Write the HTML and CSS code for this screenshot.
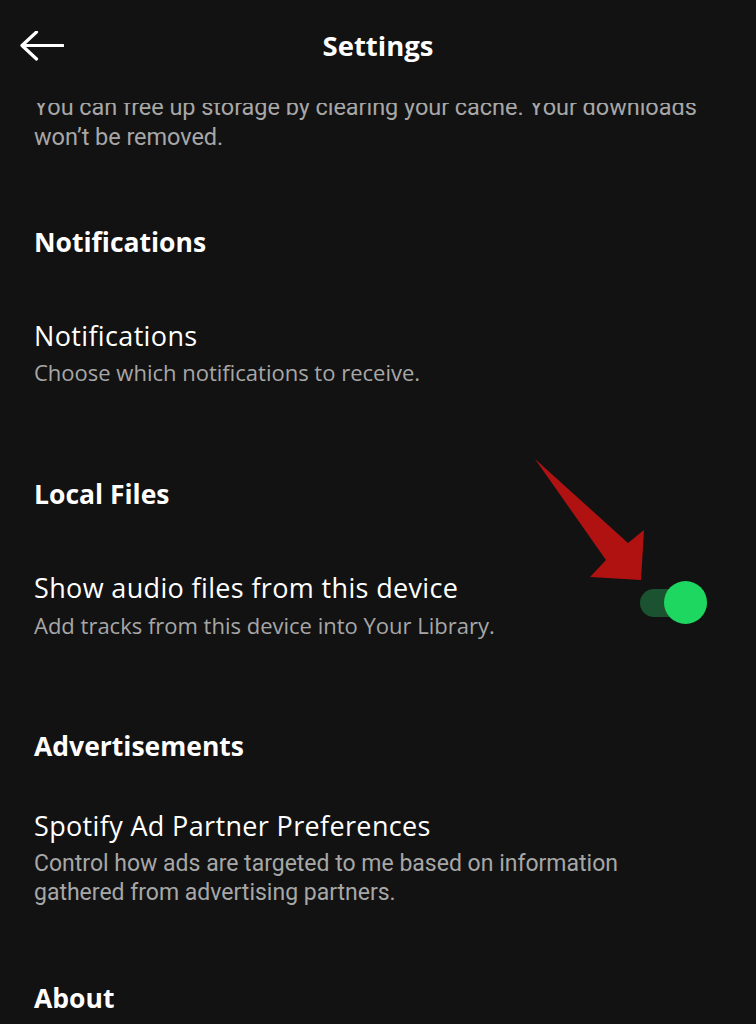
FILE: index.html
```html
<!DOCTYPE html>
<html lang="en">
<head>
<meta charset="utf-8">
<title>Settings</title>
<link rel="stylesheet" href="styles.css">
</head>
<body>
<div class="screen">
  <header class="topbar">
    <div class="back">
      <svg width="44" height="32" viewBox="0 0 44 32" aria-hidden="true">
        <path d="M2 14.5 H43 M16.5 1 L2 14.5 L16.5 28" fill="none" stroke="#fff" stroke-width="3.2" stroke-linecap="round" stroke-linejoin="round"/>
      </svg>
    </div>
    <h1 class="title">Settings</h1>
    <div></div>
  </header>
  <main class="content">
    <p class="note">You can free up storage by clearing your cache. Your downloads won’t be removed.</p>

    <h2 class="section section-first">Notifications</h2>
    <div class="item">
      <div class="item-text">
        <div class="item-title">Notifications</div>
        <div class="item-sub">Choose which notifications to receive.</div>
      </div>
    </div>

    <h2 class="section">Local Files</h2>
    <div class="item">
      <div class="item-text">
        <div class="item-title">Show audio files from this device</div>
        <div class="item-sub item-sub-tight">Add tracks from this device into Your Library.</div>
      </div>
      <div class="toggle"><span class="knob"></span></div>
    </div>

    <h2 class="section section-ads">Advertisements</h2>
    <div class="item item-ads">
      <div class="item-text">
        <div class="item-title">Spotify Ad Partner Preferences</div>
        <div class="item-sub note-font">Control how ads are targeted to me based on information gathered from advertising partners.</div>
      </div>
    </div>

    <h2 class="section section-last">About</h2>
  </main>
  <svg class="annot" width="120" height="130" viewBox="530 455 120 130" aria-hidden="true">
    <polygon points="535,459 628,543 644,530 641,580 590,577 606,560" fill="#b01212"/>
  </svg>
</div>
</body>
</html>
```

FILE: styles.css
```css
* { box-sizing: border-box; }
html, body {
  margin: 0;
  padding: 0;
  background: #121212;
}
.screen {
  position: relative;
  width: 756px;
  height: 1024px;
  overflow: hidden;
  background: #121212;
  color: #ffffff;
  font-family: "Open Sans", "Noto Sans", sans-serif;
}
.topbar {
  height: 103px;
  display: grid;
  grid-template-columns: 1fr auto 1fr;
  align-items: center;
  padding: 0 20px 6px 20px;
  background: #121212;
}
.back {
  display: flex;
  align-items: center;
  height: 32px;
  margin-top: -4px;
}
.back svg { display: block; }
.title {
  margin: 0;
  margin-top: -5px;
  font-size: 27.5px;
  font-weight: 700;
  line-height: 34px;
}
.content {
  height: 921px;
  overflow: hidden;
  padding: 0 49px 0 34px;
}
.note, .note-font {
  font-family: "Roboto", "Liberation Sans", sans-serif;
}
.note {
  margin: -11px -30px 0 0;
  font-size: 23.5px;
  letter-spacing: -0.05px;
  line-height: 30px;
  color: #a7a7a7;
}
.section {
  margin: 75px 0 0 0;
  font-size: 26.5px;
  font-weight: 700;
  line-height: 30px;
}
.item {
  display: flex;
  align-items: center;
  justify-content: space-between;
  margin-top: 62px;
}
.item-ads { margin-top: 48px; }
.item-title {
  font-size: 27px;
  letter-spacing: 0.35px;
  line-height: 34px;
}
.item-sub {
  margin-top: 4px;
  font-size: 22px;
  line-height: 30px;
  color: #a7a7a7;
}
.item-sub-tight { margin-top: 5px; }
.item + .section { margin-top: 92px; }
.item + .section-ads { margin-top: 91px; }
.item-ads .item-sub {
  font-size: 23px;
  letter-spacing: 0;
  line-height: 29px;
  margin-top: 6px;
}
.item-ads + .section { margin-top: 76px; }
.toggle {
  position: relative;
  width: 67px;
  height: 28px;
  border-radius: 14px;
  background: #1b5230;
  flex-shrink: 0;
  margin-top: -6px;
}
.knob {
  position: absolute;
  right: 0;
  top: 50%;
  width: 43px;
  height: 43px;
  margin-top: -21.5px;
  border-radius: 50%;
  background: #1ed760;
}
.annot {
  position: absolute;
  left: 530px;
  top: 455px;
  z-index: 3;
}
```
